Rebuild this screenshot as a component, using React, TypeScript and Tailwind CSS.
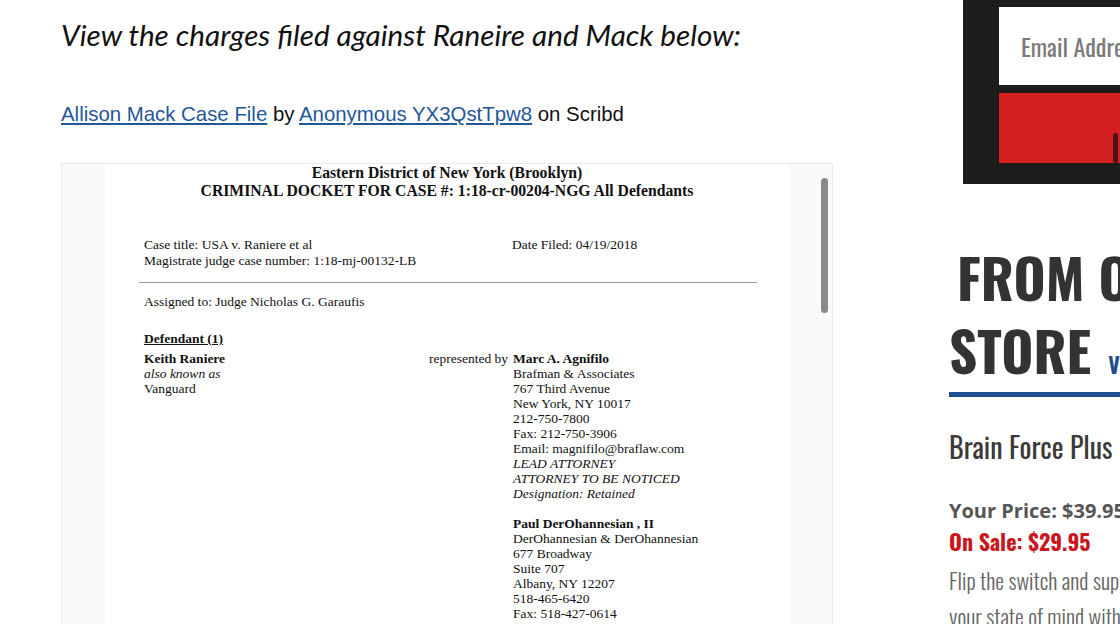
import React from "react";

const serif = { fontFamily: "'Liberation Serif', 'Times New Roman', serif" };
const cond = { fontFamily: "'Oswald', 'Liberation Sans Narrow', 'DejaVu Sans Condensed', 'Roboto', sans-serif" };

function Lines({ items }: { items: { t: string; b?: boolean; i?: boolean }[] }) {
  return (
    <div>
      {items.map((l, k) => (
        <div key={k} className={`${l.b ? "font-bold" : ""} ${l.i ? "italic" : ""} h-[15px]`}>
          {l.t}
        </div>
      ))}
    </div>
  );
}

export default function App() {
  return (
    <div className="flex w-[1120px] h-[624px] overflow-hidden bg-white">
      {/* Main column */}
      <div className="shrink-0 w-[833px] pl-[61px]">
        <h2
          className="pt-[18px] text-[29.7px] leading-[34px] italic text-[#111]"
          style={{ fontFamily: "'Lato', 'Open Sans', sans-serif" }}
        >
          View the charges filed against Raneire and Mack below:
        </h2>
        <p
          className="mt-[50px] text-[20.4px] leading-[24px] text-[#111]"
          style={{ fontFamily: "'Liberation Sans', Arial, sans-serif" }}
        >
          <span className="text-[#24579a] underline">Allison Mack Case File</span> by{" "}
          <span className="text-[#24579a] underline">Anonymous YX3QstTpw8</span> on Scribd
        </p>

        {/* Document viewer */}
        <div className="mt-[37px] w-[772px] h-[500px] border border-[#ebebeb] flex">
          <div className="w-[43px] shrink-0 bg-[#fafafa]" />
          <div className="w-[684px] shrink-0 bg-white text-[13.5px] leading-[15px] text-[#111]" style={serif}>
            <div className="text-center font-bold text-[15.7px] leading-[18px]">
              <div>Eastern District of New York (Brooklyn)</div>
              <div>CRIMINAL DOCKET FOR CASE #: 1:18-cr-00204-NGG All Defendants</div>
            </div>
            <div className="pl-[39px]">
              <div className="mt-[37px] flex leading-[16px]">
                <div className="w-[368px] shrink-0">
                  <div>Case title: USA v. Raniere et al</div>
                  <div>Magistrate judge case number: 1:18-mj-00132-LB</div>
                </div>
                <div>Date Filed: 04/19/2018</div>
              </div>
              <div className="mt-[13px] -ml-[5px] w-[618px] h-px bg-[#9a9a9a]" />
              <div className="mt-[11px]">Assigned to: Judge Nicholas G. Garaufis</div>
              <div className="mt-[22px] font-bold underline">Defendant (1)</div>
              <div className="mt-[5px] flex">
                <div className="w-[285px] shrink-0">
                  <Lines items={[{ t: "Keith Raniere", b: true }, { t: "also known as", i: true }, { t: "Vanguard" }]} />
                </div>
                <div className="w-[84px] shrink-0 text-right pr-[6px] whitespace-nowrap">represented by</div>
                <div>
                  <Lines
                    items={[
                      { t: "Marc A. Agnifilo", b: true },
                      { t: "Brafman & Associates" },
                      { t: "767 Third Avenue" },
                      { t: "New York, NY 10017" },
                      { t: "212-750-7800" },
                      { t: "Fax: 212-750-3906" },
                      { t: "Email: magnifilo@braflaw.com" },
                      { t: "LEAD ATTORNEY", i: true },
                      { t: "ATTORNEY TO BE NOTICED", i: true },
                      { t: "Designation: Retained", i: true },
                      { t: "" },
                      { t: "Paul DerOhannesian , II", b: true },
                      { t: "DerOhannesian & DerOhannesian" },
                      { t: "677 Broadway" },
                      { t: "Suite 707" },
                      { t: "Albany, NY 12207" },
                      { t: "518-465-6420" },
                      { t: "Fax: 518-427-0614" },
                    ]}
                  />
                </div>
              </div>
            </div>
          </div>
          <div className="flex-1 bg-[#fafafa] pt-[14px] pl-[32px]">
            <div className="w-[7px] h-[135px] rounded-full bg-[#8a8a8a]" />
          </div>
        </div>
      </div>

      {/* Sidebar */}
      <div className="shrink-0 ml-[116px] w-[320px]">
        <div className="ml-[14px] h-[184px] bg-[#1c1c1c] pt-[7px] pl-[36px]">
          <div className="h-[78px] bg-white flex items-center pl-[22px]">
            <span className="text-[24px] text-[#7a7a7a]" style={cond}>Email Address</span>
          </div>
          <div className="mt-[8px] h-[70px] bg-[#d42020] flex items-end pl-[114px]">
            <div className="w-[5px] h-[30px] rounded-full bg-[#4a1212]" />
          </div>
        </div>

        <div className="mt-[56px] text-[#333] font-bold text-[55px] leading-[73px] whitespace-nowrap" style={cond}>
          <div className="pl-[8px]">FROM OUR</div>
          <div className="h-[73px]">
            STORE
            <span className="ml-[17px] text-[22px] leading-none align-baseline text-[#1f4e8f]">VIEW ALL</span>
          </div>
        </div>
        <div className="mt-[6px] h-[5px] bg-[#1f4e8f]" />

        <div className="mt-[30px] text-[28px] leading-[40px] text-[#3a3a3a]" style={cond}>Brain Force Plus</div>
        <div
          className="mt-[31px] text-[20px] leading-[26px] font-bold text-[#555] whitespace-nowrap"
          style={{ fontFamily: "'Open Sans', sans-serif" }}
        >
          Your Price: $39.95
        </div>
        <div className="mt-[2px] text-[22px] leading-[30px] font-bold text-[#c8181e]" style={cond}>On Sale: $29.95</div>
        <div className="mt-[6px] text-[22px] leading-[36px] font-light text-[#666] whitespace-nowrap" style={cond}>
          <div>Flip the switch and supercharge</div>
          <div>your state of mind with</div>
        </div>
      </div>
    </div>
  );
}
